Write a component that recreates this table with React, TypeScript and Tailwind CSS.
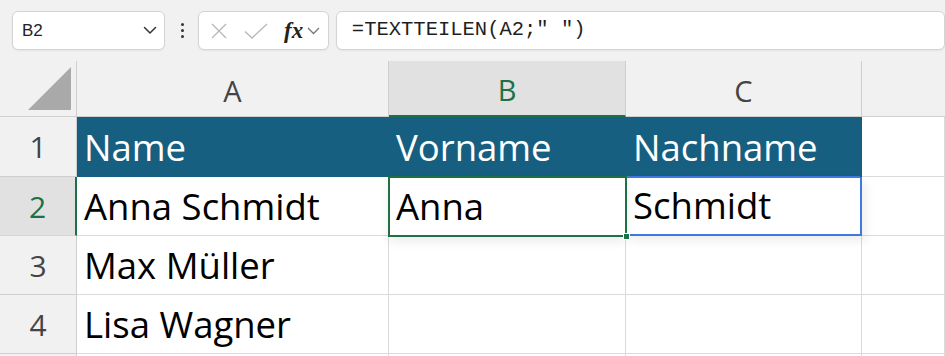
import React from "react"

const cellFont = "font-['Open_Sans',sans-serif]"

function TopBar() {
	return (
		<div className="flex h-[61px] items-center bg-[#f1f1f1] pl-[12px]">
			<div className="flex h-[39px] w-[155px] items-center justify-between rounded-[6px] border border-[#d4d4d4] bg-white pl-[9px] pr-[7px] shadow-[0_1px_2px_rgba(0,0,0,0.06)]">
				<span className="font-['Liberation_Sans',sans-serif] text-[17px] text-[#222]">B2</span>
				<svg width="14" height="9" viewBox="0 0 14 9" fill="none">
					<path d="M1.5 1.5 L7 7 L12.5 1.5" stroke="#333" strokeWidth="1.5" strokeLinecap="round" strokeLinejoin="round" />
				</svg>
			</div>
			<div className="flex w-[34px] flex-col items-center gap-[3px] pl-[2px]">
				<span className="h-[3px] w-[3px] rounded-full bg-[#333]" />
				<span className="h-[3px] w-[3px] rounded-full bg-[#333]" />
				<span className="h-[3px] w-[3px] rounded-full bg-[#333]" />
			</div>
			<div className="flex h-[39px] w-[133px] items-center rounded-[6px] border border-[#d4d4d4] bg-white pl-[12px] shadow-[0_1px_2px_rgba(0,0,0,0.06)]">
				<svg width="16" height="16" viewBox="0 0 16 16" fill="none">
					<path d="M1 1 L15 15 M15 1 L1 15" stroke="#b8b8b8" strokeWidth="1.4" />
				</svg>
				<svg className="ml-[17px]" width="24" height="16" viewBox="0 0 24 16" fill="none">
					<path d="M1 8.5 L8 15 L23 1" stroke="#b8b8b8" strokeWidth="1.4" />
				</svg>
				<span className="ml-[16px] font-['Liberation_Serif',serif] text-[23px] font-semibold italic leading-none text-[#222]">fx</span>
				<svg className="ml-[4px]" width="13" height="8" viewBox="0 0 13 8" fill="none">
					<path d="M1 1 L6.5 6.5 L12 1" stroke="#777" strokeWidth="1.3" />
				</svg>
			</div>
			<div className="ml-[7px] flex h-[39px] w-[620px] items-center rounded-[6px] border border-[#d4d4d4] bg-white pl-[15px] shadow-[0_1px_2px_rgba(0,0,0,0.06)]">
				<span className="font-['Liberation_Mono',monospace] text-[20.5px] text-[#1f1f1f]">=TEXTTEILEN(A2;" ")</span>
			</div>
		</div>
	)
}

function ColHeader({ label, selected }: { label: string; selected?: boolean }) {
	return (
		<div
			className={
				selected
					? `flex items-center justify-center border-r border-b-2 border-r-[#cfcfcf] border-b-[#1e7145] bg-[#e1e1e1] pt-[4px] ${cellFont} text-[29px] text-[#1e7145]`
					: `flex items-center justify-center border-r border-b border-[#cfcfcf] bg-[#f1f1f1] pt-[4px] ${cellFont} text-[29px] text-[#444]`
			}
		>
			{label}
		</div>
	)
}

function RowHeader({ label, selected }: { label: string; selected?: boolean }) {
	return (
		<div
			className={
				selected
					? `flex items-center justify-center border-r-2 border-b border-r-[#1e7145] border-b-[#d6d6d6] bg-[#e1e1e1] ${cellFont} text-[30px] text-[#1e7145]`
					: `flex items-center justify-center border-r border-b border-[#cfcfcf] bg-[#f1f1f1] ${cellFont} text-[30px] text-[#444]`
			}
		>
			{label}
		</div>
	)
}

function Cell({ children, head }: { children?: React.ReactNode; head?: boolean }) {
	return (
		<div
			className={
				head
					? `flex items-center bg-[#175f80] pl-[7px] ${cellFont} text-[36.5px] text-white`
					: `flex items-center border-r border-b border-[#dadada] bg-white pl-[7px] ${cellFont} text-[36.5px] text-black`
			}
		>
			{children}
		</div>
	)
}

export default function App() {
	return (
		<div className="h-[356px] w-[945px] overflow-hidden bg-white">
			<TopBar />
			<div className="grid grid-cols-[77px_312px_237px_236px_1fr] grid-rows-[56px_60px_59px_59px_59px_59px]">
				<div className="relative border-r border-b border-[#cfcfcf] bg-[#f1f1f1]">
					<svg className="absolute left-0 top-0" width="77" height="56" viewBox="0 0 77 56">
						<polygon points="71,6 28,49 71,49" fill="#a9a9a9" />
					</svg>
				</div>
				<ColHeader label="A" />
				<ColHeader label="B" selected />
				<ColHeader label="C" />
				<div className="border-b border-[#cfcfcf] bg-[#f1f1f1]" />

				<RowHeader label="1" />
				<Cell head>Name</Cell>
				<Cell head>Vorname</Cell>
				<Cell head>Nachname</Cell>
				<Cell />

				<RowHeader label="2" selected />
				<Cell>Anna Schmidt</Cell>
				<div className={`relative z-10 flex items-center bg-white pl-[7px] ${cellFont} text-[36.5px] text-black`}>
					<div className="pointer-events-none absolute -left-[1px] -top-[1px] -right-[1px] -bottom-[1px] border-2 border-[#1e7145] shadow-[0_5px_10px_rgba(0,0,0,0.07)]" />
					<span className="absolute -bottom-[4px] -right-[4px] z-20 h-[7px] w-[7px] border border-white bg-[#1e7145]" />
					<span className="relative">Anna</span>
				</div>
				<div className={`relative z-[5] flex items-center border-r-2 border-b-2 border-[#3f78e0] bg-white pl-[7px] shadow-[4px_5px_10px_rgba(0,0,0,0.07)] ${cellFont} text-[36.5px] text-black`}>
					<span className="absolute -top-[1px] left-0 right-0 h-[2px] bg-[#3f78e0]" />
					<span className="relative">Schmidt</span>
				</div>
				<Cell />

				<RowHeader label="3" />
				<Cell>Max Müller</Cell>
				<Cell />
				<Cell />
				<Cell />

				<RowHeader label="4" />
				<Cell>Lisa Wagner</Cell>
				<Cell />
				<Cell />
				<Cell />

				<RowHeader label="" />
				<Cell />
				<Cell />
				<Cell />
				<Cell />
			</div>
		</div>
	)
}
